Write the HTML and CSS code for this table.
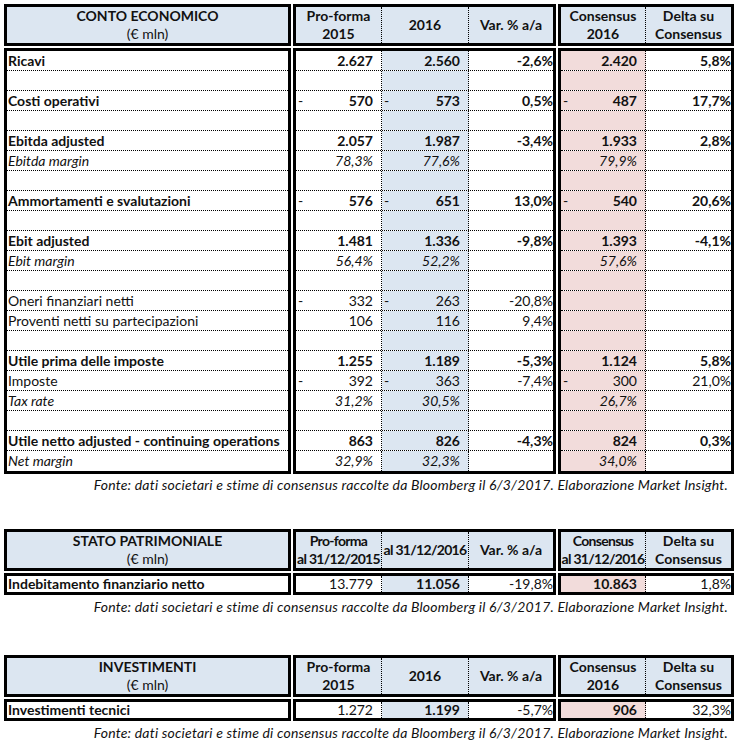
FILE: index.html
```html
<!DOCTYPE html>
<html lang="it">
<head>
<meta charset="utf-8">
<title>Conto economico</title>
<link rel="stylesheet" href="styles.css">
</head>
<body>
<div class="sheet">

  <section class="block b1">
    <div class="band head">
      <div class="box lbl">
        <div class="hcell"><b>CONTO ECONOMICO</b><span>(€ mln)</span></div>
      </div>
      <div class="box main">
        <div class="hcell"><b>Pro-forma</b><b>2015</b></div>
        <div class="hcell"><b>2016</b></div>
        <div class="hcell"><b>Var. % a/a</b></div>
      </div>
      <div class="box cons">
        <div class="hcell"><b>Consensus</b><b>2016</b></div>
        <div class="hcell"><b>Delta su</b><b>Consensus</b></div>
      </div>
    </div>
    <div class="band body">
      <div class="box lbl">
        <div class="row bold">Ricavi</div>
        <div class="row"></div>
        <div class="row bold">Costi operativi</div>
        <div class="row"></div>
        <div class="row bold">Ebitda adjusted</div>
        <div class="row ital">Ebitda margin</div>
        <div class="row"></div>
        <div class="row bold">Ammortamenti e svalutazioni</div>
        <div class="row"></div>
        <div class="row bold">Ebit adjusted</div>
        <div class="row ital">Ebit margin</div>
        <div class="row"></div>
        <div class="row">Oneri finanziari netti</div>
        <div class="row">Proventi netti su partecipazioni</div>
        <div class="row"></div>
        <div class="row bold">Utile prima delle imposte</div>
        <div class="row">Imposte</div>
        <div class="row ital">Tax rate</div>
        <div class="row"></div>
        <div class="row bold">Utile netto adjusted - continuing operations</div>
        <div class="row ital">Net margin</div>
      </div>
      <div class="box main">
        <div class="row bold"><span class="c num">2.627</span><span class="c num blue">2.560</span><span class="c pct">-2,6%</span></div>
        <div class="row"><span class="c"></span><span class="c blue"></span><span class="c"></span></div>
        <div class="row bold"><span class="c num neg">570</span><span class="c num blue neg">573</span><span class="c pct">0,5%</span></div>
        <div class="row"><span class="c"></span><span class="c blue"></span><span class="c"></span></div>
        <div class="row bold"><span class="c num">2.057</span><span class="c num blue">1.987</span><span class="c pct">-3,4%</span></div>
        <div class="row ital"><span class="c num">78,3%</span><span class="c num blue">77,6%</span><span class="c"></span></div>
        <div class="row"><span class="c"></span><span class="c blue"></span><span class="c"></span></div>
        <div class="row bold"><span class="c num neg">576</span><span class="c num blue neg">651</span><span class="c pct">13,0%</span></div>
        <div class="row"><span class="c"></span><span class="c blue"></span><span class="c"></span></div>
        <div class="row bold"><span class="c num">1.481</span><span class="c num blue">1.336</span><span class="c pct">-9,8%</span></div>
        <div class="row ital"><span class="c num">56,4%</span><span class="c num blue">52,2%</span><span class="c"></span></div>
        <div class="row"><span class="c"></span><span class="c blue"></span><span class="c"></span></div>
        <div class="row"><span class="c num neg">332</span><span class="c num blue neg">263</span><span class="c pct">-20,8%</span></div>
        <div class="row"><span class="c num">106</span><span class="c num blue">116</span><span class="c pct">9,4%</span></div>
        <div class="row"><span class="c"></span><span class="c blue"></span><span class="c"></span></div>
        <div class="row bold"><span class="c num">1.255</span><span class="c num blue">1.189</span><span class="c pct">-5,3%</span></div>
        <div class="row"><span class="c num neg">392</span><span class="c num blue neg">363</span><span class="c pct">-7,4%</span></div>
        <div class="row ital"><span class="c num">31,2%</span><span class="c num blue">30,5%</span><span class="c"></span></div>
        <div class="row"><span class="c"></span><span class="c blue"></span><span class="c"></span></div>
        <div class="row bold"><span class="c num">863</span><span class="c num blue">826</span><span class="c pct">-4,3%</span></div>
        <div class="row ital"><span class="c num">32,9%</span><span class="c num blue">32,3%</span><span class="c"></span></div>
      </div>
      <div class="box cons">
        <div class="row bold"><span class="c num pink">2.420</span><span class="c pct">5,8%</span></div>
        <div class="row"><span class="c pink"></span><span class="c"></span></div>
        <div class="row bold"><span class="c num pink neg">487</span><span class="c pct">17,7%</span></div>
        <div class="row"><span class="c pink"></span><span class="c"></span></div>
        <div class="row bold"><span class="c num pink">1.933</span><span class="c pct">2,8%</span></div>
        <div class="row ital"><span class="c num pink">79,9%</span><span class="c"></span></div>
        <div class="row"><span class="c pink"></span><span class="c"></span></div>
        <div class="row bold"><span class="c num pink neg">540</span><span class="c pct">20,6%</span></div>
        <div class="row"><span class="c pink"></span><span class="c"></span></div>
        <div class="row bold"><span class="c num pink">1.393</span><span class="c pct">-4,1%</span></div>
        <div class="row ital"><span class="c num pink">57,6%</span><span class="c"></span></div>
        <div class="row"><span class="c pink"></span><span class="c"></span></div>
        <div class="row"><span class="c pink"></span><span class="c"></span></div>
        <div class="row"><span class="c pink"></span><span class="c"></span></div>
        <div class="row"><span class="c pink"></span><span class="c"></span></div>
        <div class="row bold"><span class="c num pink">1.124</span><span class="c pct">5,8%</span></div>
        <div class="row"><span class="c num pink neg">300</span><span class="c pct">21,0%</span></div>
        <div class="row ital"><span class="c num pink">26,7%</span><span class="c"></span></div>
        <div class="row"><span class="c pink"></span><span class="c"></span></div>
        <div class="row bold"><span class="c num pink">824</span><span class="c pct">0,3%</span></div>
        <div class="row ital"><span class="c num pink">34,0%</span><span class="c"></span></div>
      </div>
    </div>
    <p class="note">Fonte: dati societari e stime di consensus raccolte da Bloomberg il 6/3/2017. Elaborazione Market Insight.</p>
  </section>

  <section class="block b2">
    <div class="band head">
      <div class="box lbl">
        <div class="hcell"><b>STATO PATRIMONIALE</b><span>(€ mln)</span></div>
      </div>
      <div class="box main">
        <div class="hcell tight"><b>Pro-forma</b><b>al 31/12/2015</b></div>
        <div class="hcell tight"><b>al 31/12/2016</b></div>
        <div class="hcell"><b>Var. % a/a</b></div>
      </div>
      <div class="box cons">
        <div class="hcell tight"><b>Consensus</b><b>al 31/12/2016</b></div>
        <div class="hcell"><b>Delta su</b><b>Consensus</b></div>
      </div>
    </div>
    <div class="band body single">
      <div class="box lbl">
        <div class="row bold">Indebitamento finanziario netto</div>
      </div>
      <div class="box main">
        <div class="row"><span class="c num">13.779</span><span class="c num blue bold">11.056</span><span class="c pct">-19,8%</span></div>
      </div>
      <div class="box cons">
        <div class="row"><span class="c num pink bold">10.863</span><span class="c pct">1,8%</span></div>
      </div>
    </div>
    <p class="note">Fonte: dati societari e stime di consensus raccolte da Bloomberg il 6/3/2017. Elaborazione Market Insight.</p>
  </section>

  <section class="block b3">
    <div class="band head">
      <div class="box lbl">
        <div class="hcell"><b>INVESTIMENTI</b><span>(€ mln)</span></div>
      </div>
      <div class="box main">
        <div class="hcell"><b>Pro-forma</b><b>2015</b></div>
        <div class="hcell"><b>2016</b></div>
        <div class="hcell"><b>Var. % a/a</b></div>
      </div>
      <div class="box cons">
        <div class="hcell"><b>Consensus</b><b>2016</b></div>
        <div class="hcell"><b>Delta su</b><b>Consensus</b></div>
      </div>
    </div>
    <div class="band body single">
      <div class="box lbl">
        <div class="row bold">Investimenti tecnici</div>
      </div>
      <div class="box main">
        <div class="row"><span class="c num">1.272</span><span class="c num blue bold">1.199</span><span class="c pct">-5,7%</span></div>
      </div>
      <div class="box cons">
        <div class="row"><span class="c num pink bold">906</span><span class="c pct">32,3%</span></div>
      </div>
    </div>
    <p class="note">Fonte: dati societari e stime di consensus raccolte da Bloomberg il 6/3/2017. Elaborazione Market Insight.</p>
  </section>

</div>
</body>
</html>
```

FILE: styles.css
```css
html, body {
  margin: 0;
  padding: 0;
  background: #ffffff;
}

body {
  font-family: Lato, "Open Sans", "Liberation Sans", sans-serif;
  font-size: 14px;
  color: #111111;
}

.sheet {
  padding: 4px 0 0 4px;
  width: 730px;
}

.block {
  display: flex;
  flex-direction: column;
  gap: 2px;
}

.b2 { margin-top: 35px; }
.b3 { margin-top: 39px; }

.band {
  display: flex;
  gap: 2px;
}

.box {
  border: 3px solid #000000;
  box-sizing: border-box;
}

.box.lbl { width: 287px; }
.box.main { width: 263px; }
.box.cons { width: 176px; }

.head .box {
  display: grid;
  height: 42px;
  background: #dce6f1;
}

.head .box.lbl { grid-template-columns: 1fr; }
.head .box.main { grid-template-columns: 86px 87px 1fr; }
.head .box.cons { grid-template-columns: 85px 1fr; }

.hcell {
  display: flex;
  flex-direction: column;
  justify-content: center;
  align-items: center;
  line-height: 18px;
  border-right: 1px dotted #000000;
  white-space: nowrap;
  overflow: hidden;
}

.hcell.tight { letter-spacing: -0.7px; }

.hcell:last-child { border-right: none; }

.hcell b { font-weight: 700; }
.hcell span { font-weight: 400; }

.row {
  height: 20px;
  line-height: 19px;
  box-sizing: border-box;
  border-bottom: 1px dotted #000000;
  white-space: nowrap;
}

.row:last-child {
  border-bottom: none;
  line-height: 20px;
}

.box.lbl .row { padding-left: 1px; }

.box.main .row {
  display: grid;
  grid-template-columns: 86px 87px 1fr;
}

.box.cons .row {
  display: grid;
  grid-template-columns: 85px 1fr;
}

.single .row {
  height: 16px;
  line-height: 16px;
}

.c {
  display: block;
  position: relative;
  height: 100%;
  text-align: right;
  border-right: 1px dotted #000000;
}

.c:last-child { border-right: none; }

.c.num { padding-right: 8px; }
.c.pct { padding-right: 0; }

.neg::before {
  content: "-";
  position: absolute;
  left: 2px;
  top: 0;
  font-weight: 400;
  font-style: normal;
}

.blue { background: #dce6f1; }
.pink { background: #f2dcdb; }

.bold { font-weight: 700; }
.ital { font-style: italic; }

.note {
  margin: 0;
  padding-right: 6px;
  text-align: right;
  font-style: italic;
  letter-spacing: 0.2px;
  line-height: 18px;
}

.b2 .note,
.b3 .note {
  padding-top: 1px;
}
```
